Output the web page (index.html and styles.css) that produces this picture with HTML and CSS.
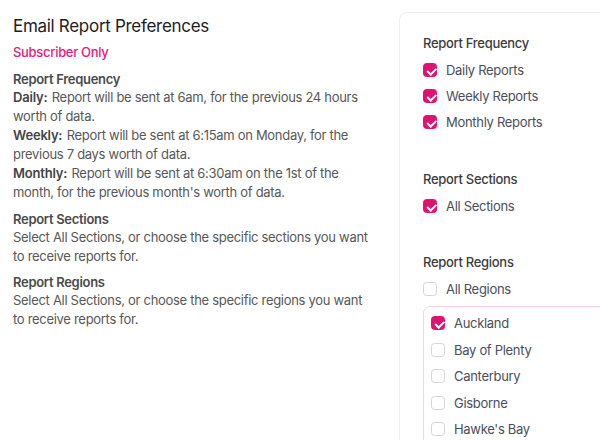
FILE: index.html
```html
<!DOCTYPE html>
<html>
<head>
<meta charset="utf-8">
<link rel="stylesheet" href="styles.css">
</head>
<body>
<div class="page">
  <div class="info">
    <h1 class="title">Email Report Preferences</h1>
    <div class="badge">Subscriber Only</div>
    <div class="block">
      <div class="heading">Report Frequency</div>
      <p class="text"><b>Daily:</b> Report will be sent at 6am, for the previous 24 hours worth of data.</p>
      <p class="text"><b>Weekly:</b> Report will be sent at 6:15am on Monday, for the previous 7 days worth of data.</p>
      <p class="text"><b>Monthly:</b> Report will be sent at 6:30am on the 1st of the month, for the previous month's worth of data.</p>
    </div>
    <div class="block">
      <div class="heading">Report Sections</div>
      <p class="text">Select All Sections, or choose the specific sections you want to receive reports for.</p>
    </div>
    <div class="block">
      <div class="heading">Report Regions</div>
      <p class="text">Select All Sections, or choose the specific regions you want to receive reports for.</p>
    </div>
  </div>
  <div class="card">
    <div class="group">
      <div class="glabel">Report Frequency</div>
      <label class="opt"><span class="box on"></span>Daily Reports</label>
      <label class="opt"><span class="box on"></span>Weekly Reports</label>
      <label class="opt"><span class="box on"></span>Monthly Reports</label>
    </div>
    <div class="group">
      <div class="glabel">Report Sections</div>
      <label class="opt"><span class="box on"></span>All Sections</label>
    </div>
    <div class="group">
      <div class="glabel">Report Regions</div>
      <label class="opt"><span class="box"></span>All Regions</label>
      <div class="regions">
        <label class="opt ropt"><span class="box on"></span>Auckland</label>
        <label class="opt ropt"><span class="box"></span>Bay of Plenty</label>
        <label class="opt ropt"><span class="box"></span>Canterbury</label>
        <label class="opt ropt"><span class="box"></span>Gisborne</label>
        <label class="opt ropt"><span class="box"></span>Hawke's Bay</label>
      </div>
    </div>
  </div>
</div>
</body>
</html>
```
FILE: styles.css
```css
* { box-sizing: border-box; }
html, body { margin: 0; padding: 0; background: #fff; overflow: hidden; }
body { font-family: Inter, "Noto Sans", sans-serif; color: #555; }
.page { display: flex; align-items: flex-start; height: 440px; overflow: hidden; }
.info { width: 399px; padding: 15px 26px 0 13px; flex: none; }
.title { margin: 0; font-size: 17px; font-weight: 400; color: #1d1d1f; line-height: 22px; letter-spacing: -0.3px; }
.badge { margin-top: 6px; font-size: 13px; font-weight: 500; color: #e8197a; line-height: 18px; letter-spacing: -0.3px; }
.block { margin-top: 8px; }
.block:nth-child(3) { margin-top: 10px; }
.block:nth-child(4) { margin-top: 9px; }
.heading { font-size: 13px; font-weight: 600; color: #4a4a4a; line-height: 17px; letter-spacing: -0.3px; }
.text { margin: 0; font-size: 13px; line-height: 19px; color: #575757; letter-spacing: -0.3px; }
.text b { font-weight: 600; color: #444; letter-spacing: -0.2px; margin-right: 1px; }
.card { flex: none; width: 260px; margin-top: 12px; border: 1px solid #f0f0f0; border-radius: 8px; padding: 21px 0 0 23px; height: 460px; }
.group { margin-bottom: 35px; }
.group:nth-child(2) { margin-bottom: 34px; }
.glabel { font-size: 13px; font-weight: 500; color: #3c3c3c; line-height: 18px; margin-bottom: 5px; letter-spacing: -0.3px; }
.opt { display: flex; align-items: center; gap: 9px; height: 26px; font-size: 13px; color: #4b4e58; letter-spacing: -0.3px; }
.ropt { height: 26.5px; }
.box { width: 14px; height: 14px; border: 1px solid #d3d6dd; border-radius: 3.5px; background: #fff; flex: none; position: relative; }
.box.on { background: #e0126f; border-color: #e0126f; }
.box.on::after { content: ""; position: absolute; left: 4.5px; top: 2px; width: 3.5px; height: 6.5px; border: solid #fff; border-width: 0 2.2px 2.2px 0; transform: rotate(45deg); }
.regions { margin-top: 4px; border: 1px solid #fbd3e4; border-radius: 7px; padding: 3px 0 0 7px; height: 200px; }
```
